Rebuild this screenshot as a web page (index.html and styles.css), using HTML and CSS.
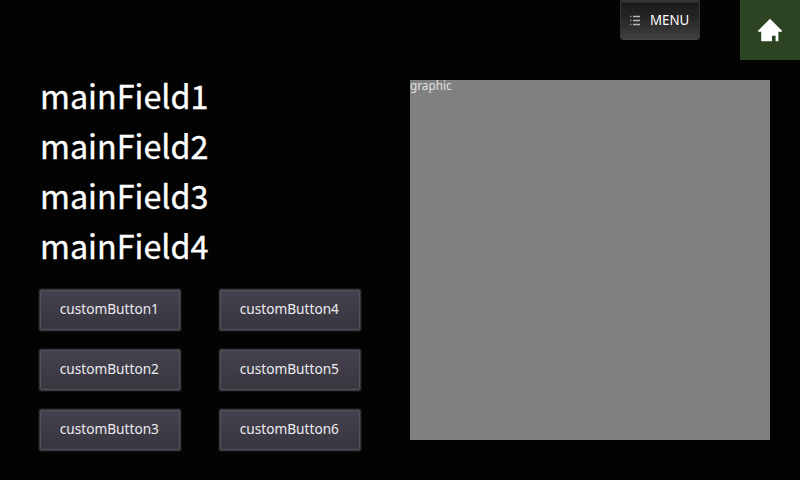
FILE: index.html
```html
<!DOCTYPE html>
<html lang="en">
<head>
<meta charset="utf-8">
<title>Main panel</title>
<link rel="stylesheet" href="styles.css">
</head>
<body>
<header class="topbar">
  <button class="menu">
    <svg class="menu-icon" width="11" height="11" viewBox="0 0 11 11"><path d="M3 1.5h7M3 5.5h7M3 9.5h7" stroke="#b8b6b7" stroke-width="1.7"/><path d="M0 1.5h1.5M0 5.5h1.5M0 9.5h1.5" stroke="#8a8889" stroke-width="1.3"/></svg>
    <span>MENU</span>
  </button>
  <button class="home" aria-label="Home">
    <svg width="24" height="24" viewBox="0 0 24 24"><path d="M12 .8 24 12.8v1h-3.6v9.4h-2.8v-5.5h-3.6v5.5H3.2v-9.4H0v-1Z" fill="#fff"/></svg>
  </button>
</header>
<main class="content">
  <section class="left">
    <div class="fields">
      <div>mainField1</div>
      <div>mainField2</div>
      <div>mainField3</div>
      <div>mainField4</div>
    </div>
    <div class="buttons">
      <button><span>customButton1</span></button>
      <button><span>customButton2</span></button>
      <button><span>customButton3</span></button>
      <button><span>customButton4</span></button>
      <button><span>customButton5</span></button>
      <button><span>customButton6</span></button>
    </div>
  </section>
  <section class="graphic"><span>graphic</span></section>
</main>
</body>
</html>
```
FILE: styles.css
```css
* { box-sizing: border-box; }
body {
  margin: 0;
  width: 800px;
  height: 480px;
  overflow: hidden;
  background: #030303;
  color: #fff;
  font-family: "Noto Sans", sans-serif;
}
button {
  margin: 0;
  padding: 0;
  border: 0;
  color: inherit;
  font: inherit;
}
.topbar {
  display: flex;
  justify-content: flex-end;
  align-items: flex-start;
  gap: 40px;
  height: 80px;
}
.menu {
  display: flex;
  align-items: center;
  width: 80px;
  height: 40px;
  padding-left: 10px;
  gap: 9px;
  border-radius: 2px 2px 4px 4px;
  background: linear-gradient(#343434 0 2px, #1d1c1d 3px, #242324 40%, #403e3f 95%, #4a4849);
  box-shadow: inset 1px 0 #333, inset -1px 0 #333;
  font-size: 14px;
  line-height: 20px;
}
.menu span {
  transform: scaleX(.95);
  transform-origin: left;
}
.home {
  display: flex;
  justify-content: center;
  align-items: center;
  width: 60px;
  height: 60px;
  background: #2d4422;
}
.content {
  display: flex;
  justify-content: space-between;
  padding: 0 30px 0 40px;
}
.fields {
  height: 210px;
  font-family: "Noto Sans CJK SC", sans-serif;
  font-size: 32.3px;
  line-height: 30px;
  -webkit-text-stroke: .35px #fff;
}
.fields div {
  height: 50px;
}
.buttons {
  display: grid;
  grid-template-rows: repeat(3, 40px);
  grid-auto-columns: 140px;
  grid-auto-flow: column;
  gap: 20px 40px;
}
.buttons button {
  padding-bottom: 2px;
  background: linear-gradient(#45424f, #37353e);
  border: 1px solid #55525c;
  box-shadow: 0 0 0 1px #333236, 0 0 0 2px #131314;
  border-radius: 1px;
  color: #ececef;
  font-size: 14px;
  line-height: 36px;
}
.buttons span {
  display: inline-block;
  transform: translateX(-.5px) scaleX(.975);
}
.graphic {
  width: 360px;
  height: 360px;
  background: #808080;
  color: #e0e0e0;
  font-size: 12px;
  line-height: 12px;
}
.graphic span {
  display: inline-block;
  transform: scaleX(.98);
  transform-origin: left;
}
```
